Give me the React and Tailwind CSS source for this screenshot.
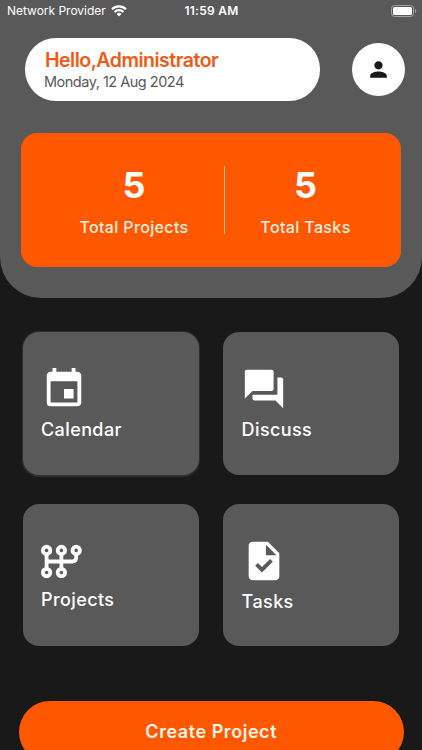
import React from 'react';
import { MdPerson, MdEvent, MdQuestionAnswer, MdTask } from 'react-icons/md';

const ShiftIcon = () => (
  <svg className="w-[42px] h-[34px]" viewBox="0 0 42 34" fill="none" stroke="#fff" strokeWidth="3.8">
    <circle cx="5.6" cy="6.4" r="3.7" />
    <circle cx="20.4" cy="6.4" r="3.7" />
    <circle cx="35.2" cy="6.4" r="3.7" />
    <circle cx="5.6" cy="28.5" r="3.7" />
    <circle cx="20.4" cy="28.5" r="3.7" />
    <path d="M5.6 10v15M20.4 10v15M5.6 17.5h25.6q4 0 4-4v-3.4" />
  </svg>
);

const StatusBar = () => (
  <div className="grid grid-cols-3 items-center h-[22px] pl-[7px] pr-[5px] text-[12px] text-white">
    <div className="flex items-center gap-[5px] whitespace-nowrap">
      <span className="tracking-[-0.02px]">Network Provider</span>
      <svg className="w-4 h-3 shrink-0" viewBox="0 0 16 12" fill="none" stroke="#fff" strokeWidth="2.2">
        <path d="M1 4.3a10 10 0 0 1 14 0M3.6 7a6.3 6.3 0 0 1 8.8 0" />
        <path d="M8 11.5 5.5 9a3.6 3.6 0 0 1 5 0z" fill="#fff" stroke="none" />
      </svg>
    </div>
    <span className="-ml-px text-center font-semibold tracking-[0.25px]">11:59 AM</span>
    <svg className="w-[26px] h-3 justify-self-end" viewBox="0 0 26 12">
      <rect x="0.5" y="0.5" width="22" height="11" rx="3" fill="none" stroke="#a3a3a3" />
      <rect x="2" y="2" width="19" height="8" rx="1.6" fill="#fff" />
      <path d="M24 4v4q1.3-.6 1.3-2T24 4z" fill="#a3a3a3" />
    </svg>
  </div>
);

const Stat = ({ value, label, className }) => (
  <div className={`flex flex-col items-center text-white ${className}`}>
    <span className="text-[36px] leading-[44px] font-bold">{value}</span>
    <span className="mt-[10px] text-[16px] leading-5 font-medium tracking-[0.36px] text-[#fff0e0] whitespace-nowrap">{label}</span>
  </div>
);

const tiles = [
  { label: 'Calendar', icon: <MdEvent size={46} />, className: 'pt-[34px] shadow-[0_0.5px_1px_1px_#303030]' },
  { label: 'Discuss', icon: <MdQuestionAnswer size={46} />, className: 'pt-[34px]', labelClass: 'pl-[0.6px]' },
  { label: 'Projects', icon: <ShiftIcon />, className: 'pt-[40px]', labelClass: 'pt-[4px]' },
  { label: 'Tasks', icon: <MdTask size={46} />, className: 'pt-[34px]', labelClass: 'pl-[0.6px]' },
];

const App = () => {
  return (
    <div className="h-[750px] overflow-hidden bg-[#191919] font-['Inter',sans-serif]">
      <div className="h-[298px] rounded-b-[41px] bg-[#595959]">
        <StatusBar />

        {/* Greeting */}
        <div className="flex items-center justify-between mt-4 pl-[25px] pr-[17px]">
          <div className="w-[295px] h-[63px] pl-5 pt-[11px] rounded-[31px] bg-white whitespace-nowrap">
            <p className="text-[19.5px] leading-[23px] font-semibold tracking-[-0.5px] text-[#f15a14]">Hello,Administrator</p>
            <p className="mt-px -ml-px text-[14.5px] leading-[18px] tracking-[-0.5px] text-[#595959]">Monday, 12 Aug 2024</p>
          </div>
          <div className="flex items-center justify-center w-[53px] h-[53px] rounded-full bg-white text-[#191919]">
            <MdPerson size={25} />
          </div>
        </div>

        {/* Totals */}
        <div className="flex mt-8 mx-[21px] w-[380px] h-[134px] pt-[30px] rounded-2xl bg-[#ff5800]">
          <Stat value={5} label="Total Projects" className="w-[203px] pl-[23px]" />
          <div className="w-px h-[68px] mt-[3px] bg-[#ffb68c]" />
          <Stat value={5} label="Total Tasks" className="w-[161px]" />
        </div>
      </div>

      <div className="grid grid-cols-[176px_176px] gap-x-[24px] gap-y-[29px] mt-[34px] ml-[23px]">
        {tiles.map((tile) => (
          <div key={tile.label} className={`h-[142.5px] pl-[18px] rounded-2xl bg-[#595959] text-white ${tile.className}`}>
            {tile.icon}
            <div className={tile.labelClass}>
              <p className="mt-[6px] text-[18px] leading-6 font-medium tracking-[0.4px]">{tile.label}</p>
            </div>
          </div>
        ))}
      </div>

      <button className="block w-[385px] h-[62px] mt-[55px] ml-[18.7px] pb-px rounded-full bg-[#ff5800] text-[18px] font-semibold tracking-[0.55px] text-[#fff5ea]">
        Create Project
      </button>
    </div>
  );
};

export default App;
